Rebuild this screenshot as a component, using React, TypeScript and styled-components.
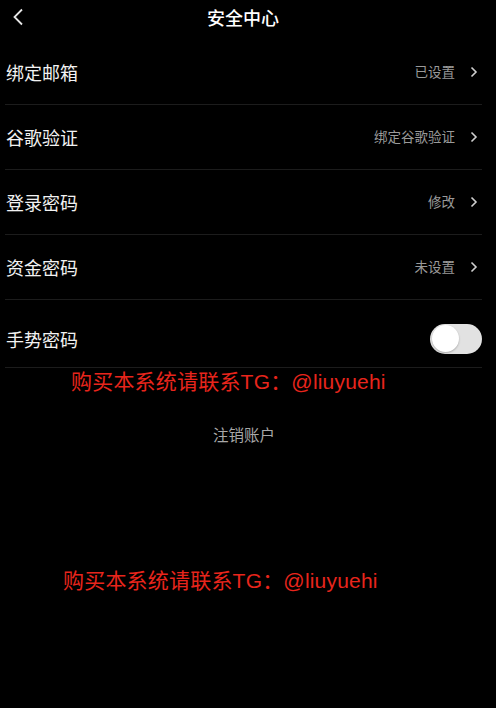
import React from "react";
import styled, { createGlobalStyle } from "styled-components";

const Global = createGlobalStyle`
  html, body { margin: 0; padding: 0; background: #000; }
  body { font-family: "Noto Sans CJK SC", "Noto Sans", sans-serif; }
  * { box-sizing: border-box; }
`;

const Page = styled.div`
  position: relative;
  width: 496px;
  min-height: 708px;
  background: #000;
  color: #fff;
  overflow: hidden;
`;

const Header = styled.div`
  position: relative;
  height: 33px;
  display: flex;
  align-items: center;
  justify-content: center;
  margin-bottom: 7px;
`;

const BackButton = styled.div`
  position: absolute;
  left: 10px;
  top: 6px;
  width: 16px;
  height: 22px;
  display: flex;
  align-items: center;
  justify-content: center;
`;

const Title = styled.div`
  font-size: 18px;
  font-weight: 500;
  color: #fff;
  line-height: 1;
  margin-left: -10px;
`;

const List = styled.div`
  display: flex;
  flex-direction: column;
  padding: 0 14px 0 5px;
`;

const Row = styled.div<{ $h?: number; $pt?: number }>`
  height: ${(p) => p.$h ?? 65}px;
  padding-top: ${(p) => p.$pt ?? 0}px;
  display: flex;
  align-items: center;
  justify-content: space-between;
  border-bottom: 1px solid #1c1c1c;
  padding-left: 1px;
`;

const Label = styled.div`
  font-size: 18px;
  color: #f2f2f2;
  line-height: 1;
`;

const Right = styled.div`
  display: flex;
  align-items: center;
  gap: 15px;
  padding-right: 4px;
`;

const Value = styled.div`
  font-size: 13.5px;
  color: #9a9a9a;
  line-height: 1;
`;

const Track = styled.div<{ $on?: boolean }>`
  width: 52px;
  height: 30px;
  border-radius: 15px;
  background: ${(p) => (p.$on ? "#4cd964" : "#e2e2e2")};
  display: flex;
  align-items: center;
  padding: 0 2px;
  justify-content: ${(p) => (p.$on ? "flex-end" : "flex-start")};
`;

const Knob = styled.div`
  width: 27px;
  height: 27px;
  border-radius: 50%;
  background: #fff;
  box-shadow: 0 1px 2px rgba(0, 0, 0, 0.25);
`;

const Logout = styled.div`
  margin-top: 59px;
  padding-right: 8px;
  text-align: center;
  font-size: 15.5px;
  color: #a8a8a8;
  line-height: 1;
`;

const Watermark = styled.div<{ $x: number; $y: number }>`
  position: absolute;
  left: ${(p) => p.$x}px;
  top: ${(p) => p.$y}px;
  font-family: "Liberation Sans", "Noto Sans CJK SC", sans-serif;
  font-size: 21px;
  color: #e8251c;
  line-height: 1;
  white-space: nowrap;
  pointer-events: none;
  letter-spacing: 0.2px;
`;

const Chevron = () => (
  <svg width="8" height="12" viewBox="0 0 8 12">
    <path d="M1.5 1.5 L6 6 L1.5 10.5" fill="none" stroke="#cfcfcf" strokeWidth="1.6" />
  </svg>
);

const rows = [
  { label: "绑定邮箱", value: "已设置" },
  { label: "谷歌验证", value: "绑定谷歌验证" },
  { label: "登录密码", value: "修改" },
  { label: "资金密码", value: "未设置" },
];

export default function App() {
  return (
    <Page>
      <Global />
      <Header>
        <BackButton>
          <svg width="12" height="18" viewBox="0 0 12 18">
            <path d="M10 1.5 L2.5 9 L10 16.5" fill="none" stroke="#e6e6e6" strokeWidth="1.8" />
          </svg>
        </BackButton>
        <Title>安全中心</Title>
      </Header>
      <List>
        {rows.map((r) => (
          <Row key={r.label}>
            <Label>{r.label}</Label>
            <Right>
              <Value>{r.value}</Value>
              <Chevron />
            </Right>
          </Row>
        ))}
        <Row $h={68} $pt={10}>
          <Label>手势密码</Label>
          <Track>
            <Knob />
          </Track>
        </Row>
      </List>
      <Logout>注销账户</Logout>
      <Watermark $x={71} $y={371}>购买本系统请联系TG：@liuyuehi</Watermark>
      <Watermark $x={63} $y={570}>购买本系统请联系TG：@liuyuehi</Watermark>
    </Page>
  );
}
